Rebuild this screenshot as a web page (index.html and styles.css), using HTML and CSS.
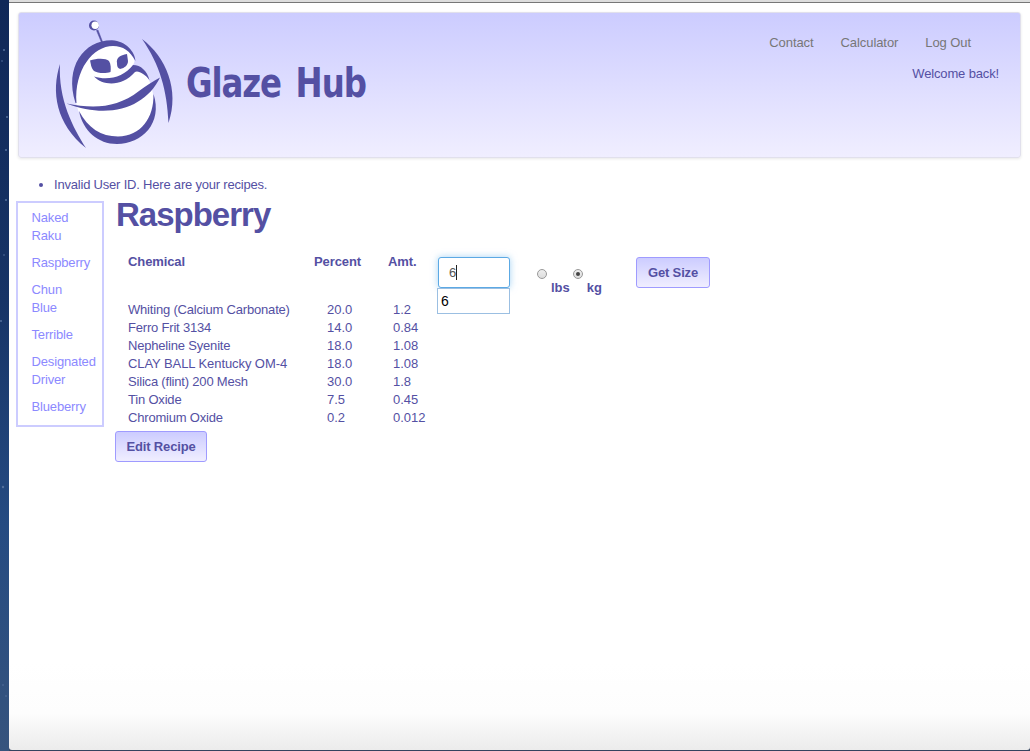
FILE: index.html
```html
<!DOCTYPE html>
<html lang="en">
<head>
<meta charset="utf-8">
<title>Glaze Hub</title>
<link rel="stylesheet" href="styles.css">
</head>
<body>
<div class="desktop">
  <svg class="stars" viewBox="0 0 9 751" fill="#54719d"><circle cx="4" cy="50" r="1"/><circle cx="2" cy="61" r=".8"/><circle cx="7" cy="117" r="1"/><circle cx="6" cy="150" r="1"/><circle cx="6" cy="200" r="1"/><circle cx="4" cy="255" r=".8"/><circle cx="1" cy="321" r="1"/><circle cx="3" cy="487" r="1.2"/><circle cx="3" cy="685" r=".8"/><circle cx="6" cy="696" r=".8"/></svg>
  <div class="window">
    <header class="header">
      <svg class="logo" viewBox="50 15 130 135" fill="#5450a3">
        <path fill="#fff" d="M76 102C74 70 90 44 116 45C128 46 135 57 134.500 62L132.500 66C141 67 151 77 153 94C157 119 139 138 117 138C99 138 86 128 78 110Z"/>
        <path d="M75.500 103C64 67 84 40 112 40.300C126 41 135 52 135.500 61C130 51 123 46 113 46C93 46 74 70 76.500 103Z"/>
        <path d="M60 64C51 92 56 124 86 148C73 128 58 99 60 64Z"/>
        <path d="M142 39C166 57 180 90 168.500 123C167 90 160 65 142 39Z"/>
        <path d="M94 76.500C108 81 124 77 133 65C141 65 147 71 149.500 80C145 74 138 70 135 72C122 87 103 86 94 76.500Z"/>
        <path d="M66.500 103.500C94 109 117 108 139 91C146 86 153 81 160 77.500C146 107 110 120 66.500 103.500Z"/>
        <path d="M79 111C88 128 101 136.500 118 136.500C141 136 154 118 153.500 94C163 123 142 144 117 144C98 144 83 131 79 111Z"/>
        <path d="M90 60.500C97 58 106 58 109 61C111 64 111 69 110.500 72C105 74 97 73 94 71C91 68 91 64 90 60.500Z"/>
        <path d="M127 54C120 55 116 58 117 63C117 67 118 68 120 69C125 68 128 65 128 61Z"/>
        <circle cx="94" cy="25.500" r="5"/><circle cx="95.200" cy="25.200" r="3.700" fill="#fff"/>
        <path d="M96.500 30.500L98 30L103 43L101.500 42.500Z" stroke="#5450a3" stroke-width=".5"/>
      </svg>
      <div class="brand">Glaze Hub</div>
      <div class="account">
        <nav class="nav"><a class="contact">Contact</a><a class="calculator">Calculator</a><a class="logout">Log Out</a></nav>
        <div class="welcome">Welcome back!</div>
      </div>
    </header>
    <ul class="messages"><li>Invalid User ID. Here are your recipes.</li></ul>
    <main class="content">
      <aside class="recipes">
        <a>Naked<br>Raku</a><a>Raspberry</a><a>Chun<br>Blue</a><a>Terrible</a><a>Designated<br>Driver</a><a>Blueberry</a>
      </aside>
      <section class="recipe">
        <h1 class="title">Raspberry</h1>
        <div class="sheet">
          <table class="chemicals">
            <thead><tr><th>Chemical</th><th class="percent-head">Percent</th><th class="amount-head">Amt.</th></tr></thead>
            <tbody>
              <tr><td>Whiting (Calcium Carbonate)</td><td>20.0</td><td>1.2</td></tr>
              <tr><td>Ferro Frit 3134</td><td>14.0</td><td>0.84</td></tr>
              <tr><td>Nepheline Syenite</td><td>18.0</td><td>1.08</td></tr>
              <tr><td class="clay">CLAY BALL Kentucky OM-4</td><td>18.0</td><td>1.08</td></tr>
              <tr><td>Silica (flint) 200 Mesh</td><td>30.0</td><td>1.8</td></tr>
              <tr><td>Tin Oxide</td><td>7.5</td><td>0.45</td></tr>
              <tr><td>Chromium Oxide</td><td>0.2</td><td>0.012</td></tr>
            </tbody>
          </table>
          <div class="size-form">
            <div class="size-field"><div class="field">6<span class="caret"></span></div><div class="suggestion">6</div></div>
            <div class="units">
              <label class="unit"><span class="radio"></span><span class="unit-name">lbs</span></label>
              <label class="unit"><span class="radio checked"></span><span class="unit-name">kg</span></label>
            </div>
            <button class="button get-size">Get Size</button>
          </div>
        </div>
        <button class="button edit">Edit Recipe</button>
      </section>
    </main>
  </div>
</div>
</body>
</html>
```
FILE: styles.css
```css
* { box-sizing: border-box; }
body { margin: 0; overflow: hidden; }
.desktop { display: flex; width: 1030px; height: 751px; padding-bottom: 1px; background: linear-gradient(90deg, transparent 0 9px, #34445f 9px), linear-gradient(#102858, #173466 40%, #254b82 70%, #36547d); }
.stars { width: 9px; height: 751px; flex: none; }
.window { width: 1021px; height: 748px; margin-top: 2px; padding: 9px 9px 0 7px; border-top: 1px solid #777; background: linear-gradient(#fff 660px, #fdfdfd 710px, #ebebeb 748px); border-radius: 0 0 3px 3px; box-shadow: 0 -2px #ddd; font: 13px/18px "Liberation Sans", Arial, sans-serif; color: #5450a3; }
.header { display: flex; align-items: flex-start; width: 1003px; height: 146px; margin-left: 2px; padding: 2px 21px 0 31px; border: 1px solid #e1e0ec; border-radius: 3px; background: linear-gradient(#ccccff, #f0eeff); box-shadow: 0 1px 3px #00000018; }
.logo { width: 130px; height: 135px; flex: none; }
.brand { margin: 43px 0 0 6px; font: bold 40px/50px "DejaVu Sans Condensed", "DejaVu Sans", sans-serif; font-stretch: condensed; letter-spacing: -1.2px; word-spacing: 5px; white-space: nowrap; transform: scaleX(.9); transform-origin: left; }
.account { margin-left: auto; padding-top: 19px; }
.nav { display: flex; gap: 27px; padding-right: 28px; color: #777; letter-spacing: -.08px; }
.welcome { margin-top: 13px; text-align: right; letter-spacing: -.15px; }
.messages { margin: 18px 0 7px; padding-left: 38px; letter-spacing: -.2px; }
.content { display: flex; align-items: flex-start; gap: 11px; }
.recipes { display: flex; flex-direction: column; gap: 9px; width: 88px; height: 226px; padding: 6px 6px 0 13.5px; border: 2px solid #ccccff; color: #8c89ff; letter-spacing: -.15px; }
.title { margin: -4px 0 0; padding-left: 1px; font-size: 33px; line-height: 36px; letter-spacing: -1px; }
.sheet { display: flex; padding: 19px 0 0 13px; }
.chemicals { border-collapse: collapse; table-layout: fixed; width: 309px; height: 174px; margin: 1px 0 -1px; }
.chemicals th, .chemicals td { padding: 0; text-align: left; vertical-align: top; height: 18px; white-space: nowrap; }
.chemicals td:first-child { letter-spacing: -.19px; }
.chemicals td.clay { letter-spacing: -.08px; }
.chemicals th { height: 48px; width: 199px; letter-spacing: -.1px; }
.chemicals .percent-head { width: 66px; }
.chemicals .percent-head, .chemicals .amount-head { text-indent: -13px; }
.chemicals .amount-head { width: 44px; text-indent: -5px; }
.size-form { display: flex; align-items: flex-start; padding-top: 5px; }
.size-field { width: 73px; }
.field { display: flex; align-items: center; width: 72px; height: 31px; margin-left: 1px; padding-left: 10px; border: 1px solid #5ca9e4; border-radius: 3px; box-shadow: 0 0 7px #6ab5ec99; color: #555; background: #fff; }
.caret { width: 1px; height: 15px; background: #222; }
.suggestion { width: 73px; height: 26px; padding: 3px; border: 1px solid #9bbfe2; color: #000; background: #fff; font-size: 14px; }
.units { display: flex; gap: 3px; margin-left: 27px; padding-top: 12px; width: 99px; }
.unit { display: flex; gap: 4px; font-weight: bold; }
.unit-name { padding-top: 10px; }
.radio { display: flex; align-items: center; justify-content: center; width: 10px; height: 10px; border: 1px solid #999; border-radius: 50%; background: linear-gradient(#eee, #ddd); }
.checked::after { content: ""; width: 4px; height: 4px; border-radius: 50%; background: #444; }
.button { display: block; height: 31px; padding: 0; border: 1px solid #9f9bff; border-radius: 3px; background: linear-gradient(#ccccff, #f0eeff); color: #5450a3; font: bold 13px/18px "Liberation Sans", Arial, sans-serif; letter-spacing: -.15px; }
.get-size { width: 74px; }
.edit { width: 92px; margin-top: 5px; }
```
